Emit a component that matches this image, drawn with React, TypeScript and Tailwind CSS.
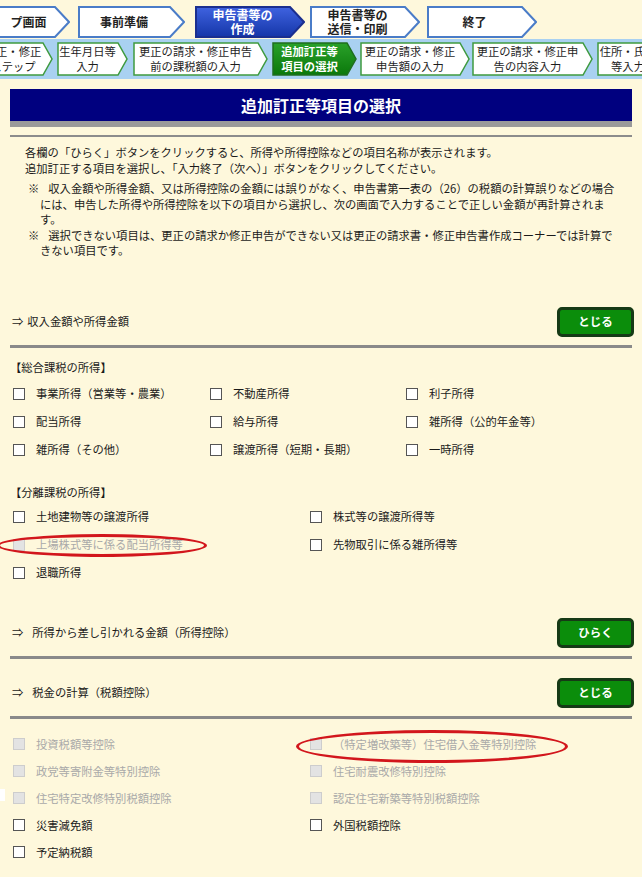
import React from "react";

type Variant = "white" | "blue" | "whiteG" | "green";

function Step({
  w,
  h,
  tip,
  cls,
  textCls,
  variant,
  children,
}: {
  w: number;
  h: number;
  tip: number;
  cls: string;
  textCls: string;
  variant: Variant;
  children: React.ReactNode;
}) {
  const pts = `1,1 ${w - tip},1 ${w - 1},${h / 2} ${w - tip},${h - 1} 1,${h - 1}`;
  let fill = "#ffffff";
  let stroke = "#4a7cc8";
  let sw = 2;
  if (variant === "blue") {
    fill = "url(#gBlue)";
    stroke = "#1b2f8f";
  } else if (variant === "whiteG") {
    stroke = "#3f9a3f";
    sw = 1.5;
  } else if (variant === "green") {
    fill = "url(#gGreen)";
    stroke = "#1f6e1f";
    sw = 1.5;
  }
  return (
    <div className={`relative shrink-0 ${cls}`}>
      <svg className="absolute inset-0" width={w} height={h}>
        <defs>
          <linearGradient id="gBlue" x1="0" y1="0" x2="0" y2="1">
            <stop offset="0" stopColor="#3f63e0" />
            <stop offset="1" stopColor="#1536a8" />
          </linearGradient>
          <linearGradient id="gGreen" x1="0" y1="0" x2="0" y2="1">
            <stop offset="0" stopColor="#2aa12a" />
            <stop offset="1" stopColor="#0b780b" />
          </linearGradient>
        </defs>
        <polygon points={pts} fill={fill} stroke={stroke} strokeWidth={sw} />
      </svg>
      <div
        className={`relative flex h-full flex-col items-center justify-center whitespace-nowrap text-center ${textCls}`}
      >
        {children}
      </div>
    </div>
  );
}

function Btn({ children }: { children: React.ReactNode }) {
  return (
    <div className="flex h-[30px] w-[77px] items-center justify-center rounded-[5px] border-[3px] border-[#163a16] bg-[#0b8d0b] text-[11.5px] font-bold text-white">
      {children}
    </div>
  );
}

function CB({ label, disabled }: { label: string; disabled?: boolean }) {
  return (
    <div className="flex h-full items-center whitespace-nowrap">
      <span
        className={`h-[12px] w-[12px] shrink-0 border ${
          disabled ? "border-[#cdcdcd] bg-[#e3e3e3]" : "border-[#555555] bg-white"
        }`}
      />
      <span className={`ml-[11px] ${disabled ? "text-[#a9a9a9]" : ""}`}>{label}</span>
    </div>
  );
}

export default function App() {
  return (
    <div className="relative h-[877px] w-[642px] overflow-hidden bg-[#fef8dc] font-['Noto_Sans_CJK_JP','Noto_Sans',sans-serif] text-[11.3px] text-[#1a1a1a]">
      {/* Top steps row */}
      <div className="mt-[6px] flex h-[32px] text-[12px] font-bold text-[#222]">
        <Step w={80} h={32} tip={15} cls="ml-[-10px] w-[80px] h-[32px]" textCls="pr-[15px] pl-[12px]" variant="white">
          <span>プ画面</span>
        </Step>
        <Step w={107} h={32} tip={15} cls="ml-[8px] w-[107px] h-[32px]" textCls="pr-[15px]" variant="white">
          <span>事前準備</span>
        </Step>
        <Step w={110} h={32} tip={15} cls="ml-[10px] w-[110px] h-[32px]" textCls="pr-[15px] text-white leading-[14px]" variant="blue">
          <span>申告書等の</span>
          <span>作成</span>
        </Step>
        <Step w={110} h={32} tip={15} cls="ml-[5px] w-[110px] h-[32px]" textCls="pr-[15px] leading-[14px]" variant="white">
          <span>申告書等の</span>
          <span>送信・印刷</span>
        </Step>
        <Step w={110} h={32} tip={15} cls="ml-[7px] w-[110px] h-[32px]" textCls="pr-[15px]" variant="white">
          <span>終了</span>
        </Step>
      </div>

      {/* Sub steps band */}
      <div className="mt-[1px] flex h-[40px] bg-[#a9d1f1] pt-[3px] text-[11.3px] text-[#1e1e1e]">
        <Step w={70} h={34} tip={10} cls="ml-[-17px] w-[70px] h-[34px]" textCls="pr-[10px] leading-[15px]" variant="whiteG">
          <span>更正・修正</span>
          <span>ステップ</span>
        </Step>
        <Step w={71} h={34} tip={10} cls="ml-[4px] w-[71px] h-[34px]" textCls="pr-[10px] leading-[15px]" variant="whiteG">
          <span>生年月日等</span>
          <span>入力</span>
        </Step>
        <Step w={135} h={34} tip={10} cls="ml-[5px] w-[135px] h-[34px]" textCls="pr-[10px] leading-[15px]" variant="whiteG">
          <span>更正の請求・修正申告</span>
          <span>前の課税額の入力</span>
        </Step>
        <Step w={85} h={34} tip={10} cls="ml-[4px] w-[85px] h-[34px]" textCls="pr-[10px] leading-[15px] text-white font-bold" variant="green">
          <span>追加訂正等</span>
          <span>項目の選択</span>
        </Step>
        <Step w={110} h={34} tip={10} cls="ml-[3px] w-[110px] h-[34px]" textCls="pr-[10px] leading-[15px]" variant="whiteG">
          <span>更正の請求・修正</span>
          <span>申告額の入力</span>
        </Step>
        <Step w={121} h={34} tip={10} cls="ml-[2px] w-[121px] h-[34px]" textCls="pr-[10px] leading-[15px]" variant="whiteG">
          <span>更正の請求・修正申</span>
          <span>告の内容入力</span>
        </Step>
        <Step w={72} h={34} tip={10} cls="ml-[4px] w-[72px] h-[34px]" textCls="pr-[10px] leading-[15px]" variant="whiteG">
          <span>住所・氏名</span>
          <span>等入力</span>
        </Step>
      </div>

      {/* Title */}
      <div className="mx-[10px] mt-[10px]">
        <div className="flex h-[32px] items-center justify-center bg-[#00007f] text-[16px] font-bold text-white">
          追加訂正等項目の選択
        </div>
        <div className="h-[6px] bg-[#9a9a9a]" />
      </div>
      <div className="mx-[10px] mt-[8px] h-[2px] bg-[#8c8c8c]" />

      {/* Description */}
      <div className="mt-[7px] pl-[25px] leading-[16px] whitespace-nowrap">
        <p>各欄の「ひらく」ボタンをクリックすると、所得や所得控除などの項目名称が表示されます。</p>
        <p>追加訂正する項目を選択し、「入力終了（次へ）」ボタンをクリックしてください。</p>
      </div>
      <div className="mt-[5px] whitespace-nowrap leading-[15.5px]">
        <p className="pl-[28px]">
          ※<span className="inline-block w-[9px]" />
          収入金額や所得金額、又は所得控除の金額には誤りがなく、申告書第一表の（26）の税額の計算誤りなどの場合
        </p>
        <p className="pl-[40px]">
          には、申告した所得や所得控除を以下の項目から選択し、次の画面で入力することで正しい金額が再計算されま
        </p>
        <p className="pl-[40px]">す。</p>
        <p className="pl-[28px]">
          ※<span className="inline-block w-[9px]" />
          選択できない項目は、更正の請求か修正申告ができない又は更正の請求書・修正申告書作成コーナーでは計算で
        </p>
        <p className="pl-[40px]">きない項目です。</p>
      </div>

      {/* Section 1 */}
      <div className="mt-[48px] flex h-[30px] items-center justify-between pl-[12px] pr-[8px]">
        <span className="whitespace-nowrap">
          ⇒<span className="ml-[4px]">収入金額や所得金額</span>
        </span>
        <Btn>とじる</Btn>
      </div>
      <div className="mx-[10px] mt-[8px] h-[3px] bg-[#8a8a8a]" />

      <p className="mt-[11px] pl-[10px] leading-[16px]">【総合課税の所得】</p>
      <div className="mt-[5px] grid grid-cols-[197px_196px_1fr] auto-rows-[28px] pl-[13px]">
        <CB label="事業所得（営業等・農業）" />
        <CB label="不動産所得" />
        <CB label="利子所得" />
        <CB label="配当所得" />
        <CB label="給与所得" />
        <CB label="雑所得（公的年金等）" />
        <CB label="雑所得（その他）" />
        <CB label="譲渡所得（短期・長期）" />
        <CB label="一時所得" />
      </div>

      <p className="mt-[20px] pl-[10px] leading-[16px]">【分離課税の所得】</p>
      <div className="mt-[3px] grid grid-cols-[297px_1fr] auto-rows-[28px] pl-[13px]">
        <CB label="土地建物等の譲渡所得" />
        <CB label="株式等の譲渡所得等" />
        <CB label="上場株式等に係る配当所得等" disabled />
        <CB label="先物取引に係る雑所得等" />
        <CB label="退職所得" />
      </div>

      {/* Section 2 */}
      <div className="mt-[31px] flex h-[30px] items-center justify-between pl-[12px] pr-[8px]">
        <span className="whitespace-nowrap">
          ⇒<span className="ml-[9px]">所得から差し引かれる金額（所得控除）</span>
        </span>
        <Btn>ひらく</Btn>
      </div>
      <div className="mx-[10px] mt-[8px] h-[3px] bg-[#8a8a8a]" />

      {/* Section 3 */}
      <div className="mt-[19px] flex h-[30px] items-center justify-between pl-[12px] pr-[8px]">
        <span className="whitespace-nowrap">
          ⇒<span className="ml-[9px]">税金の計算（税額控除）</span>
        </span>
        <Btn>とじる</Btn>
      </div>
      <div className="mx-[10px] mt-[8px] h-[3px] bg-[#8a8a8a]" />

      <div className="mt-[12px] grid grid-cols-[297px_1fr] auto-rows-[27px] pl-[13px]">
        <CB label="投資税額等控除" disabled />
        <CB label="（特定増改築等）住宅借入金等特別控除" disabled />
        <CB label="政党等寄附金等特別控除" disabled />
        <CB label="住宅耐震改修特別控除" disabled />
        <CB label="住宅特定改修特別税額控除" disabled />
        <CB label="認定住宅新築等特別税額控除" disabled />
        <CB label="災害減免額" />
        <CB label="外国税額控除" />
        <CB label="予定納税額" />
      </div>

      {/* Red ellipse annotations */}
      <div className="absolute left-[-3px] top-[534px] h-[23px] w-[210px] rounded-[50%] border-[3px] border-[#d2161c]" />
      <div className="absolute left-[296px] top-[730px] h-[33px] w-[272px] rounded-[50%] border-[3px] border-[#d2161c]" />
      <div className="absolute left-0 top-[789px] h-[12px] w-[5px] bg-white" />
    </div>
  );
}
